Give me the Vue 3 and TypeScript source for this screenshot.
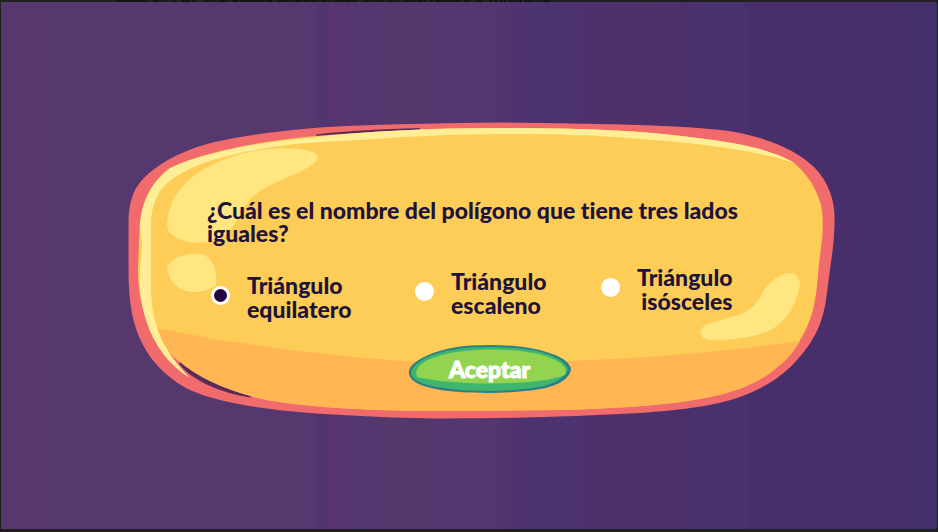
<script setup lang="ts">
import { ref } from 'vue'

interface Option {
  id: string
  lines: [string, string]
}

const question = '¿Cuál es el nombre del polígono que tiene tres lados iguales?'
const options: Option[] = [
  { id: 'equilatero', lines: ['Triángulo', 'equilatero'] },
  { id: 'escaleno', lines: ['Triángulo', 'escaleno'] },
  { id: 'isosceles', lines: ['Triángulo', 'isósceles'] },
]
const selected = ref<string>('equilatero')
</script>

<template>
  <div class="page">
    <header class="strip">
      <p class="strip-text">Subir en PDF el prototipo seleccionado entre: Storyboard o Wireframe</p>
    </header>
    <main class="stage">
      <form class="panel" @submit.prevent>
        <svg class="panel-art" viewBox="128 122 707 297" preserveAspectRatio="none" aria-hidden="true">
          <path fill="#f16b6d" d="M500 122.500C450 123 400 124 360 125.500C310 127 255 133 215 142C182 150 157 164 142 180C133 190 129 203 128.500 220L128.500 270C128.500 300 132 325 143 345C151 361 169 380 190 390C230 408 300 413 360 416C390 417.500 420 418.500 445 418.500C520 418.500 580 416 640 413C680 410 718 406 745 395C768 386 785 374 797 360C814 341 822 325 826 300L831 262C833 250 835 230 834.500 215C834 200 829 183 815 168C798 151 773 140 740 133C700 125 600 124 500 122.500Z" />
          <path fill="#5a2c59" d="M316 134.500C350 130.500 380 129 420 128L420 131L318 138ZM179 364C194 382 222 393 250 397.500L254 393L182 358Z" />
          <path fill="#fecd57" d="M500 128C430 128 365 132 310 136.500C260 141 200 153 170 168C150 183 141 203 139.500 230L138 270C138 290 141 305 148 320C156 339 166 351 180 362C200 378 225 390 262 399C300 407 370 411 440 411L560 410C600 409 670 406 710 397C735 392 755 384 770 373C795 353 809 330 814 305C818 287 818 270 820 255C823 235 824 220 821 205C816 187 807 174 793 162C765 146 710 138 640 132C600 129 550 128 500 128Z" />
          <path fill="#ffb653" d="M156 328C225 342 310 354 400 361C540 367 690 357 800 341C793 354 784 363 770 373C755 384 735 392 710 397C670 406 600 409 560 410L440 411C370 411 300 407 262 399C225 390 198 378 178 360C166 350 160 340 156 328Z" />
          <path fill="#ffee96" d="M190 378C170 366 154 346 146 320C141 304 139 290 140 270L142 243L140 228C141 203 150 184 169 169C200 153 260 142 310 138C365 131 430 128 500 128C550 128 600 129 640 132C690 136 730 142 752 147C772 152 785 157 794 163C760 152 705 143 640 139C590 134.500 550 134 500 134C450 134 400 137 360 140C320 142 300 143 280 146C250 150 240 153 220 158C204 162 193 167 180 174C168 181 161 188 157 197C152 207 151 216 151 226L151 293C152 306 153 316 157 327C162 345 174 361 190 378Z" />
          <path fill="#ffe681" d="M167 224C169 189 198 165 245 153C269 146 315 146 318 157C317 167 290 175 265 188C240 201 240 228 219 239C202 246 176 243 168 230ZM167 268C171 257 186 253 201 254C214 257 218 275 216 285C207 293 190 294 181 289C172 284 168 275 167 268ZM701 330C704 323 714 323 731 317C753 312 758 302 764 290C775 276 783 273 791 273C797 274 800 279 800 285C796 305 785 325 766 332C750 338 722 341 709 340C702 338 699 335 701 330Z" />
        </svg>
        <fieldset class="quiz">
          <legend class="question">{{ question }}</legend>
          <div class="options">
            <label v-for="option in options" :key="option.id" class="option" :for="option.id">
              <input :id="option.id" v-model="selected" class="radio" type="radio" name="triangulo" :value="option.id" />
              <span class="option-text">{{ option.lines[0] }}<br />{{ option.lines[1] }}</span>
            </label>
          </div>
        </fieldset>
        <button class="accept" type="submit">
          <svg class="accept-art" viewBox="0 0 163 48" preserveAspectRatio="none" aria-hidden="true">
            <path fill="#278286" d="M82 0C55 0 35 3 18 11C6 17 0 22 1 29C3 38 16 42 33 45C60 49 105 49 132 44C151 41 162 33 163 24C161 14 145 8 127 4C113 1 98 0 82 0Z" />
            <path fill="#3fb56e" d="M82 2C55 2 36 5 20 12C9 17 3 23 3 29C6 37 20 41 36 43C62 47 104 47 130 42C148 39 159 31 160 24C157 15 142 9 124 5C111 3 97 2 82 2Z" />
            <path fill="#92d450" d="M9 32C5 22 17 14 38 9C64 3 105 3 130 9C151 14 161 22 157 30C130 41 45 41 9 32Z" />
          </svg>
          <span class="accept-text">Aceptar</span>
        </button>
      </form>
    </main>
  </div>
</template>

<style>
body {
  margin: 0;
  background: #20201f;
}
</style>

<style scoped>
.page {
  box-sizing: border-box;
  display: flex;
  flex-direction: column;
  min-height: 100vh;
  padding: 0 1px 3px;
  background: #20201f;
  font-family: Lato, "Open Sans", sans-serif;
  font-variant-ligatures: none;
}

.strip {
  display: flex;
  align-items: flex-end;
  height: 2px;
  padding-left: 115px;
  overflow: hidden;
}

.strip-text {
  margin: 0;
  color: #0c0c0c;
  font-family: "Liberation Sans", sans-serif;
  font-size: 14px;
  line-height: 9px;
  white-space: nowrap;
}

.stage {
  display: flex;
  flex: 1;
  align-items: center;
  padding: 10px 102px 0 127px;
  background: linear-gradient(90deg, #56386e 0%, #55386d 33%, #52356f 34%, #52356f 35%, #58346f 35%, #58346f 37%, #523670 38%, #54376d 41%, #53366d 53%, #51326f 54%, #4c3470 56%, #4c3370 61%, #4d316c 62%, #4d316b 71%, #4b2f6a 73%, #4a3270 75%, #4a3270 79%, #482f6c 80%, #482f6c 91%, #472d69 92%, #472d69 96%, #432f69 97%, #432f69 100%);
}

.panel {
  position: relative;
  box-sizing: border-box;
  display: flex;
  flex-direction: column;
  align-items: center;
  gap: 24px;
  width: 100%;
  padding: 77px 63px 26px 79px;
}

.panel-art,
.accept-art {
  position: absolute;
  inset: 0;
  width: 100%;
  height: 100%;
}

.quiz {
  position: relative;
  width: 100%;
  margin: 0;
  padding: 0;
  border: 0;
}

.question,
.option {
  color: #20133a;
  font-size: 23px;
  font-weight: 900;
}

.question {
  padding: 0;
  line-height: 23px;
}

.options {
  display: grid;
  grid-template-columns: 204fr 186fr 171fr;
  min-height: 56px;
  margin: 20px 0 0 4px;
}

.option {
  display: flex;
  align-items: center;
  align-self: center;
  gap: 17px;
  line-height: 24px;
}

.option:first-child {
  align-self: end;
}

.option:last-child {
  align-self: start;
  text-align: right;
}

.radio {
  box-sizing: border-box;
  flex: none;
  width: 19px;
  height: 19px;
  margin: 0 0 4px;
  border: 3px solid #fff;
  border-radius: 50%;
  background: #fff;
  appearance: none;
}

.radio:checked {
  background: #250743;
}

.accept {
  position: relative;
  width: 163px;
  height: 48px;
  padding: 0;
  border: 0;
  background: transparent;
  color: #fff;
  font-family: inherit;
  font-size: 23px;
  font-weight: 900;
  line-height: 24px;
}

.accept-text {
  position: relative;
  -webkit-text-stroke: 1px #fff;
}
</style>
